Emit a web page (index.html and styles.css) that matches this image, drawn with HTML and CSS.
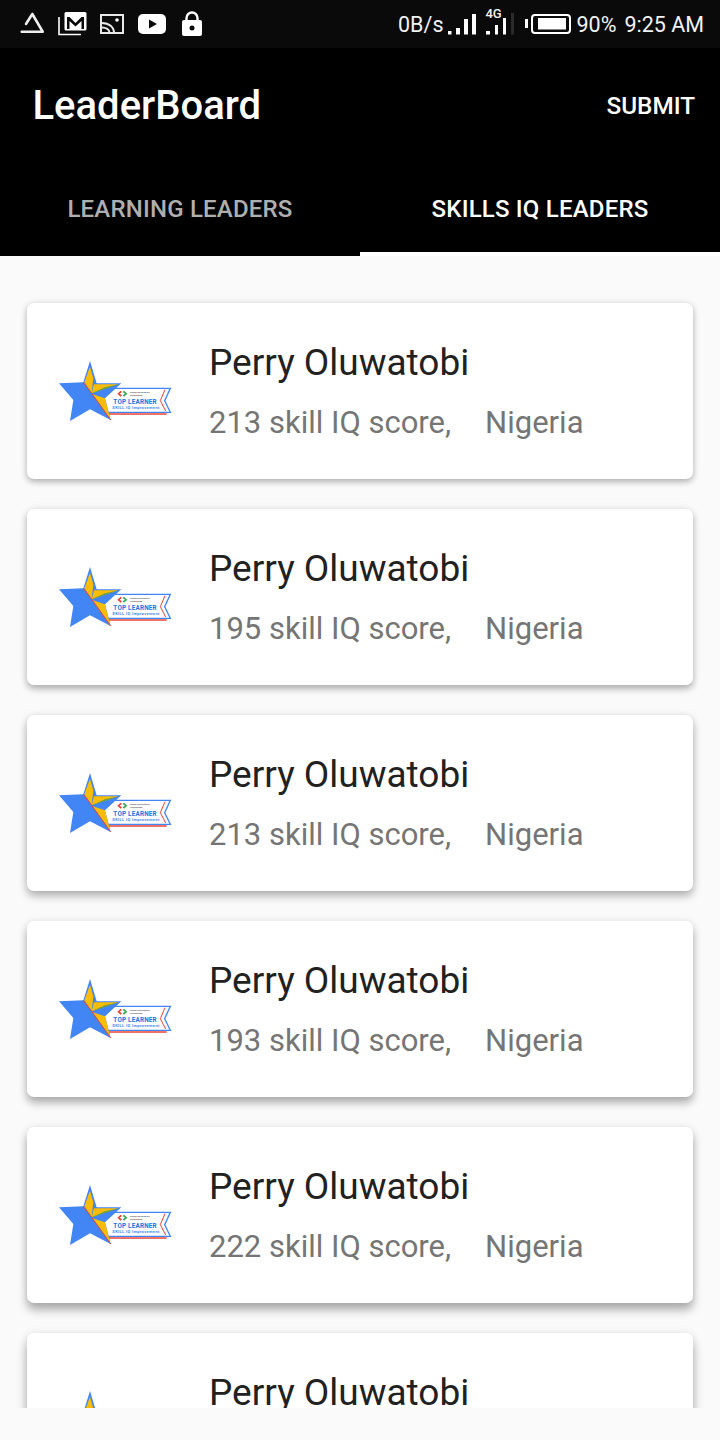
FILE: index.html
```html
<!DOCTYPE html>
<html lang="en">
<head>
<meta charset="utf-8">
<title>LeaderBoard</title>
<link rel="stylesheet" href="styles.css">
</head>
<body>
<svg class="defs" width="0" height="0" aria-hidden="true">
  <defs>
    <symbol id="badge" viewBox="0 0 390 246">
      <polygon points="190,117 360,115 343,151 360,188 172,190 140,150" fill="#fff"/>
      <polyline points="185,115 361,115 344,152 361,187 172,187" fill="none" stroke="#4285f4" stroke-width="4"/>
      <polyline points="172,192 350,192" fill="none" stroke="#ea4335" stroke-width="4"/>
      <polyline points="345,119 331,152 347,183" fill="none" stroke="#ea4335" stroke-width="3"/>
      <polygon points="120,33 140,100 214,100 165,145 182,210 120,178 60,213 70,150 27,100 100,97" fill="#4285f4"/>
      <polygon points="120,50 103,97 125,128 130,85" fill="#fbbc04"/>
      <polygon points="132,103 205,103 125,130" fill="#fbbc04"/>
      <polygon points="207,103 125,130 165,112" fill="#5f9e4a"/>
      <polygon points="128,133 165,145 180,205" fill="#fbbc04"/>
      <polyline points="100,97 125,130 182,210" fill="none" stroke="#ea4335" stroke-width="3"/>
      <polygon points="202,131 212,122 216,126 209,131 216,136 212,140" fill="#ea4335"/>
      <polygon points="232,131 222,122 218,126 225,131 218,136 222,140" fill="#34a853"/>
      <text x="240" y="130" class="tiny">Google Developers</text>
      <text x="240" y="138" class="tiny">Scholarship</text>
      <text x="190" y="162" class="top" textLength="130">TOP LEARNER</text>
      <text x="187" y="177" class="skill" textLength="141">SKILL IQ Improvement</text>
    </symbol>
  </defs>
</svg>
<div class="phone">
  <header class="status">
    <div class="status-icons">
      <svg class="ic" width="26" height="26" viewBox="0 0 26 26"><path d="M12.300 3 L6 13 M1.700 20.700 H22.700 M12.300 3 L22.700 20.700" fill="none" stroke="#eee" stroke-width="2.600" stroke-linecap="round"/></svg>
      <svg class="ic" width="30" height="26" viewBox="0 0 30 26"><path d="M1 6 V23.500 H23" fill="none" stroke="#fff" stroke-width="1.600"/><rect x="6.500" y="1" width="22" height="18.500" rx="1.500" fill="#fff"/><path d="M9 18 V6 H11.500 L17.500 12 L23.500 6 H26 V18 H23.500 V10 L17.500 15.500 L11.500 10 V18 Z" fill="#0a0a0a"/></svg>
      <svg class="ic" width="26" height="22" viewBox="0 0 26 22"><rect x="1" y="2" width="22" height="18" fill="none" stroke="#e8e8e8" stroke-width="2"/><path d="M2 10 C9 10 14 14 14 20 M2 14.500 C6 14.500 9.500 16.500 9.500 20" fill="none" stroke="#e8e8e8" stroke-width="2"/><circle cx="17" cy="7" r="1.800" fill="#fff"/></svg>
      <svg class="ic" width="28" height="20" viewBox="0 0 28 20"><rect width="28" height="20" rx="5" fill="#fff"/><path d="M11 5.500 L19 10 L11 14.500 Z" fill="#0a0a0a"/></svg>
      <svg class="ic" width="24" height="26" viewBox="0 0 24 26"><path d="M8.500 10 V7 a5.500 5.500 0 0 1 11 0 V10" fill="none" stroke="#fff" stroke-width="2.400"/><rect x="4" y="9" width="20" height="16" rx="2" fill="#fff"/><circle cx="14" cy="17" r="2.500" fill="#0a0a0a"/></svg>
    </div>
    <div class="status-right">
      <span class="speed">0B/s</span>
      <svg class="ic sig" width="28" height="24" viewBox="0 0 28 24"><rect x="0" y="19" width="3.500" height="3.500" fill="#fff"/><rect x="8" y="16" width="4" height="6.500" fill="#fff"/><rect x="16" y="7" width="4" height="15.500" fill="#fff"/><rect x="24" y="2" width="4" height="20.500" fill="#fff"/></svg>
      <span class="net">
        <span class="net-label">4G</span>
        <svg class="ic" width="28" height="24" viewBox="0 0 28 24"><rect x="0" y="19" width="4" height="3.500" fill="#fff"/><rect x="9" y="13" width="3" height="9.500" fill="#fff"/><rect x="17" y="6" width="3" height="16.500" fill="#fff"/><rect x="25" y="1" width="3" height="21.500" fill="#2a2a2a"/></svg>
      </span>
      <svg class="ic batt" width="46" height="24" viewBox="0 0 46 24"><rect x="0" y="7" width="3" height="9" fill="#fff"/><rect x="7" y="3" width="38" height="18" rx="3" fill="none" stroke="#fff" stroke-width="2"/><rect x="13" y="6" width="28" height="11.500" fill="#fff"/></svg>
      <span class="pct">90%</span>
      <span class="clock">9:25 AM</span>
    </div>
  </header>
  <section class="appbar">
    <div class="toolbar">
      <h1 class="title">LeaderBoard</h1>
      <span class="action">SUBMIT</span>
    </div>
    <nav class="tabs">
      <div class="tab">LEARNING LEADERS</div>
      <div class="tab tab-active">SKILLS IQ LEADERS</div>
    </nav>
  </section>
  <main class="list">
    <article class="card c1"><svg class="badge"><use href="#badge"/></svg><div class="info"><div class="name">Perry Oluwatobi</div><div class="meta"><span class="score">213 skill IQ score,</span><span>Nigeria</span></div></div></article>
    <article class="card c2"><svg class="badge"><use href="#badge"/></svg><div class="info"><div class="name">Perry Oluwatobi</div><div class="meta"><span class="score">195 skill IQ score,</span><span>Nigeria</span></div></div></article>
    <article class="card c3"><svg class="badge"><use href="#badge"/></svg><div class="info"><div class="name">Perry Oluwatobi</div><div class="meta"><span class="score">213 skill IQ score,</span><span>Nigeria</span></div></div></article>
    <article class="card c4"><svg class="badge"><use href="#badge"/></svg><div class="info"><div class="name">Perry Oluwatobi</div><div class="meta"><span class="score">193 skill IQ score,</span><span>Nigeria</span></div></div></article>
    <article class="card c5"><svg class="badge"><use href="#badge"/></svg><div class="info"><div class="name">Perry Oluwatobi</div><div class="meta"><span class="score">222 skill IQ score,</span><span>Nigeria</span></div></div></article>
    <article class="card c6"><svg class="badge"><use href="#badge"/></svg><div class="info"><div class="name">Perry Oluwatobi</div><div class="meta"><span class="score">213 skill IQ score,</span><span>Nigeria</span></div></div></article>
  </main>
  <div class="navgap"></div>
</div>
</body>
</html>
```
FILE: styles.css
```css
* { box-sizing: border-box; }
html, body { margin: 0; padding: 0; }
body { background: #fafafa; font-family: Roboto, "Liberation Sans", sans-serif; }
.defs { position: absolute; }
.phone { width: 720px; height: 1440px; display: flex; flex-direction: column; overflow: hidden; }

.status { height: 48px; flex: none; background: #0a0a0a; color: #fff; display: flex; justify-content: space-between; align-items: center; padding: 0 16px 0 20px; }
.status-icons { display: flex; align-items: center; gap: 12px; }
.ic { display: block; flex: none; }
.status-right { display: flex; align-items: center; font-size: 21.5px; color: #f2f2f2; }
.speed { margin-right: 5px; }
.sig { margin-right: 10px; }
.net { position: relative; margin-right: 11px; }
.net-label { position: absolute; left: -1px; top: -5px; font-size: 13px; font-weight: 500; line-height: 14px; }
.batt { margin-right: 5px; }
.pct { margin-right: 8px; }

.appbar { flex: none; height: 208px; background: #000; color: #fff; display: flex; flex-direction: column; }
.toolbar { height: 112px; display: flex; justify-content: space-between; align-items: center; padding: 3px 25px 0 32.5px; }
.title { margin: 0; font-size: 40px; font-weight: 500; }
.action { font-size: 24.3px; font-weight: 500; }
.tabs { height: 96px; display: flex; }
.tab { flex: 1; display: flex; align-items: center; justify-content: center; padding-top: 2px; font-size: 24px; letter-spacing: .2px; font-weight: 500; color: rgba(255,255,255,.7); }
.tab-active { color: #fff; box-shadow: inset 0 -4px 0 #fff; }

.list { flex: 1; min-height: 0; overflow: hidden; padding: 47px 27px 0; display: flex; flex-direction: column; gap: 30px; background: #fafafa; }
.card { flex: none; height: 176px; background: #fff; border-radius: 7px; display: flex; align-items: center; padding-left: 23px; }
.c1 { box-shadow: 0 3px 6px rgba(0,0,0,.26), 0 0 8px rgba(0,0,0,.08); }
.c2 { box-shadow: 0 4px 7px rgba(0,0,0,.27), 0 0 8px rgba(0,0,0,.08); }
.c3 { box-shadow: 0 5px 8px rgba(0,0,0,.28), 0 0 8px rgba(0,0,0,.08); }
.c4 { box-shadow: 0 6px 9px rgba(0,0,0,.29), 0 0 8px rgba(0,0,0,.08); }
.c5 { box-shadow: 0 7px 10px rgba(0,0,0,.3), 0 0 8px rgba(0,0,0,.08); }
.c6 { box-shadow: 0 8px 11px rgba(0,0,0,.3), 0 0 8px rgba(0,0,0,.08); }
.badge { display: block; flex: none; width: 130px; height: 82px; margin-right: 29px; }
.info { display: flex; flex-direction: column; }
.name { font-size: 37px; line-height: 44px; color: #212121; margin-bottom: 19px; }
.meta { font-size: 31px; line-height: 38px; color: #757575; display: flex; }
.score { margin-right: 34px; }
.navgap { flex: none; height: 32px; background: #fafafa; }

.tiny { font: 700 7px Roboto, sans-serif; fill: #555; }
.top { font: 700 19px Roboto, sans-serif; fill: #1a73e8; }
.skill { font: 700 12px Roboto, sans-serif; fill: #4285f4; }
```
